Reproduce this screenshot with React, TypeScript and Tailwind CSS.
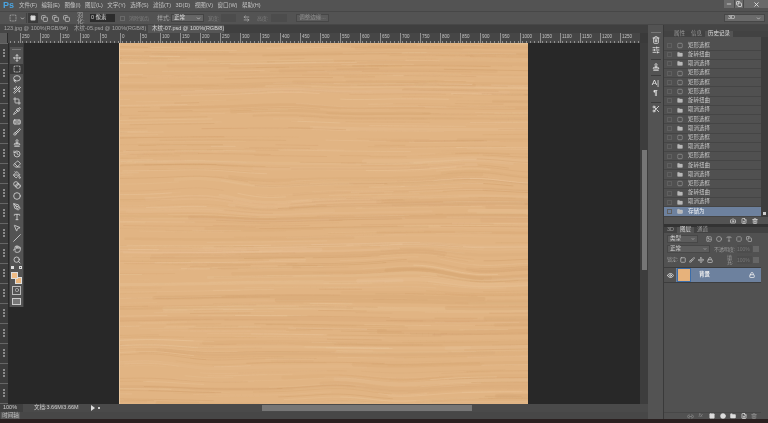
import { useMemo } from 'react';
import {
  Move, SquareDashed, Lasso, Wand2, Crop, Pipette, Bandage, Brush, Stamp, History, Eraser,
  PaintBucket, Blend, Circle, PenTool, Type, MousePointer2, Slash, Hand, Search, Minus, Copy, X,
  ChevronDown, Eye, Lock, Link2, Image, Square, Folder, FilePlus, Trash2, Camera,
  SlidersHorizontal, Scissors, ArrowLeftRight,
} from 'lucide-react';

const menus = ['文件(F)', '编辑(E)', '图像(I)', '图层(L)', '文字(Y)', '选择(S)', '滤镜(T)', '3D(D)', '视图(V)', '窗口(W)', '帮助(H)'];

const tools = [
  Move, SquareDashed, Lasso, Wand2, Crop, Pipette, Bandage, Brush, Stamp, History, Eraser,
  PaintBucket, Blend, Circle, PenTool, Type, MousePointer2, Slash, Hand, Search,
];

const historyRows = [
  '矩形选框', '旋转扭曲', '取消选择', '矩形选框', '矩形选框', '矩形选框', '旋转扭曲', '取消选择', '矩形选框',
  '取消选择', '矩形选框', '取消选择', '矩形选框', '旋转扭曲', '取消选择', '矩形选框', '旋转扭曲', '取消选择',
];

const hRuler = ['250', '200', '150', '100', '50', '0', '50', '100', '150', '200', '250', '300', '350', '400', '450', '500', '550', '600', '650', '700', '750', '800', '850', '900', '950', '1000', '1050', '1100', '1150', '1200', '1250'];

// 木纹 - seeded so every render gives the same grain
function WoodGrain() {
  const lines = useMemo(() => {
    let seed = 4242;
    const rnd = () => {
      seed = (seed * 16807) % 2147483647;
      return seed / 2147483647;
    };
    const knots = [
      { x: 115, y: 150, a: 10 },
      { x: 330, y: 225, a: 10 },
      { x: 250, y: 345, a: 8 },
      { x: 60, y: 320, a: 7 },
      { x: 385, y: 130, a: 8 },
      { x: 200, y: 60, a: 4 },
    ];
    const out: { d: string; c: string; w: number; o: number }[] = [];
    for (let i = 0; i < 760; i++) {
      const wide = i < 110;
      const y0 = rnd() * 385 - 12;
      const start = rnd() * 460 - 80;
      const len = wide ? 200 + rnd() * 300 : 25 + rnd() * 130;
      const pts: string[] = [];
      for (let x = start; x <= start + len; x += 6) {
        let y = y0 + Math.sin(x / 70 + y0 / 30) * 1.2;
        for (const k of knots) {
          const dx = (x - k.x) / 50;
          const dy = (y0 - k.y) / 20;
          y += k.a * dx * Math.exp(-dx * dx - dy * dy);
        }
        pts.push(`${x.toFixed(1)} ${y.toFixed(1)}`);
      }
      const light = rnd() > 0.55;
      out.push({
        d: 'M' + pts.join('L'),
        c: light ? '#eccaa2' : '#cf9c68',
        w: wide ? 1.5 + rnd() * 3 : 0.4 + rnd() * 0.6,
        o: wide ? 0.1 + rnd() * 0.14 : 0.15 + rnd() * 0.3,
      });
    }
    return out;
  }, []);

  return (
    <svg viewBox="0 0 409 361" preserveAspectRatio="none" className="h-full w-full">
      <rect width="409" height="361" fill="#e1b483" />
      {lines.map((l, i) => (
        <path key={i} d={l.d} fill="none" stroke={l.c} strokeWidth={l.w} opacity={l.o} strokeLinecap="round" strokeLinejoin="round" />
      ))}
    </svg>
  );
}

function MenuBar() {
  return (
    <div className="flex h-[11px] shrink-0 items-center bg-[#535353] pl-[3px]">
      <span className="w-[16px] text-[9px] leading-none font-bold text-[#4aa3df]">Ps</span>
      <div className="flex gap-[4.5px] text-[5.5px] leading-none text-[#c4c4c4]">
        {menus.map((m) => (
          <span key={m}>{m}</span>
        ))}
      </div>
      <div className="ml-auto flex h-[8px] self-start text-[#e6e6e6]">
        <span className="flex w-[10px] items-center justify-center bg-[#6a6a6a]"><Minus size={6} strokeWidth={3} /></span>
        <span className="flex w-[10px] items-center justify-center border-x border-[#4a4a4a] bg-[#6a6a6a]"><Copy size={6} strokeWidth={3} /></span>
        <span className="flex w-[24px] items-center justify-center bg-[#6a6a6a]"><X size={7} strokeWidth={3} /></span>
      </div>
    </div>
  );
}

function OptionsBar() {
  const label = 'text-[6px] leading-none text-[#a8a8a8]';
  return (
    <div className="flex h-[14px] shrink-0 items-center border-y border-[#474747] bg-[#535353] pl-[9px] text-[#c4c4c4]">
      <SquareDashed size={8} strokeWidth={2} />
      <ChevronDown size={5} strokeWidth={4} className="ml-[3px]" />
      <span className="ml-[1px] h-[10px] w-px bg-[#434343]" />
      <span className="ml-[1px] flex h-[10px] w-[10px] items-center justify-center bg-[#3a3a3a]"><Square size={6} fill="#ddd" /></span>
      <span className="ml-[1px] flex w-[11px] justify-center"><Copy size={7} strokeWidth={2.5} /></span>
      <span className="flex w-[11px] justify-center"><Copy size={7} strokeWidth={2.5} /></span>
      <span className="flex w-[11px] justify-center"><Copy size={7} strokeWidth={2.5} /></span>
      <span className={`${label} ml-[5px] w-[13px]`}>羽化:</span>
      <span className="flex h-[8px] w-[25px] items-center bg-[#2c2c2c] pl-[1px] text-[5.5px] leading-none text-[#d4d4d4]">0 像素</span>
      <span className="ml-[5px] h-[5px] w-[5px] border border-[#6a6a6a]" />
      <span className="ml-[4px] w-[24px] text-[5px] leading-none text-[#7d7d7d]">消除锯齿</span>
      <span className={`${label} ml-[4px] w-[14px]`}>样式:</span>
      <span className="flex h-[8px] w-[33px] items-center justify-between border border-[#444] bg-[#656565] px-[2px] text-[5.5px] leading-none text-[#ddd]">
        正常<ChevronDown size={5} strokeWidth={3} />
      </span>
      <span className="ml-[4px] w-[13px] text-[5px] leading-none text-[#7d7d7d]">宽度:</span>
      <span className="h-[8px] w-[15px] bg-[#4c4c4c]" />
      <ArrowLeftRight size={7} strokeWidth={2.5} className="ml-[7px] text-[#b0b0b0]" />
      <span className="ml-[7px] w-[14px] text-[5px] leading-none text-[#7d7d7d]">高度:</span>
      <span className="h-[8px] w-[16px] bg-[#4c4c4c]" />
      <span className="ml-[9px] flex h-[8px] w-[33px] items-center justify-center border border-[#474747] bg-[#5a5a5a] text-[5.5px] leading-none text-[#8f8f8f]">调整边缘...</span>
      <span className="mr-[3px] ml-auto flex h-[8px] w-[41px] items-center justify-between border border-[#474747] bg-[#6a6a6a] px-[3px] text-[5.5px] leading-none text-[#ddd]">
        3D<ChevronDown size={5} strokeWidth={3} />
      </span>
    </div>
  );
}

function DocTab({ title, active, width }: { title: string; active?: boolean; width: string }) {
  return (
    <div className={`flex h-full items-center justify-between pr-[2px] pl-[4px] ${width} ${active ? 'bg-[#555555] text-[#d8d8d8]' : 'bg-[#464646] text-[#a6a6a6]'}`}>
      <span className="text-[5.5px] leading-none whitespace-nowrap">{title}</span>
      <X size={4} strokeWidth={4} />
    </div>
  );
}

function Ruler() {
  return (
    <div className="flex h-[10px] shrink-0 bg-[#464646]">
      <div className="w-[8px] shrink-0 border-r border-[#2a2a2a] bg-[#5a5a5a]" />
      <div className="flex min-w-0 flex-1 overflow-hidden bg-[repeating-linear-gradient(90deg,#8f8f8f_0,#8f8f8f_1px,transparent_1px,transparent_4px)] bg-[length:4px_2px] bg-bottom bg-repeat-x pl-[12px]">
        {hRuler.map((n, i) => (
          <span key={i} className="h-full w-[20px] shrink-0 border-l border-[#8f8f8f] pl-[1px] text-[4.5px] leading-[7px] text-[#c4c4c4]">{n}</span>
        ))}
      </div>
      <div className="w-[8px] shrink-0 bg-[#3a3a3a]" />
    </div>
  );
}

function LeftRuler() {
  return (
    <div className="flex w-[8px] shrink-0 flex-col overflow-hidden bg-[#3c3c3c]">
      {Array.from({ length: 19 }).map((_, i) => (
        <div key={i} className="flex h-[20px] shrink-0 flex-col items-center gap-[1px] border-t border-[#666] pt-[5px]">
          <span className="h-[2px] w-[2px] bg-[#8c8c8c]" />
          <span className="h-[2px] w-[2px] bg-[#8c8c8c]" />
          <span className="h-[2px] w-[2px] bg-[#8c8c8c]" />
        </div>
      ))}
    </div>
  );
}

function Toolbox() {
  return (
    <div className="ml-[1px] flex h-[264px] w-[15px] shrink-0 flex-col items-center border-x border-[#3a3a3a] bg-[#535353] text-[#dcdcdc]">
      <div className="h-[4px] w-full bg-[#3f3f3f]" />
      <div className="mt-[2px] mb-[3px] h-px w-[9px] bg-[#777]" />
      {tools.map((Icon, i) => (
        <div key={i} className={`flex h-[10.6px] w-[13px] shrink-0 items-center justify-center ${i === 1 ? 'bg-[#3a3a3a]' : ''}`}>
          <Icon size={8} strokeWidth={2.4} />
        </div>
      ))}
      <div className="mt-[1px] flex w-[11px] justify-between">
        <span className="h-[3px] w-[3px] bg-[#ddd]" />
        <span className="h-[3px] w-[3px] border border-[#ddd]" />
      </div>
      <div className="relative mt-[3px] h-[14px] w-[13px]">
        <span className="absolute top-[5px] left-[5px] h-[7px] w-[7px] border border-[#ddd] bg-[#e9b47a]" />
        <span className="absolute top-[0px] left-[1px] h-[7px] w-[7px] border border-[#ddd] bg-[#efbb84]" />
      </div>
      <div className="flex h-[9px] w-[9px] items-center justify-center border border-[#bbb]"><Circle size={4} strokeWidth={3} /></div>
      <div className="mt-[3px] h-[7px] w-[9px] border border-[#ccc] bg-[#777]" />
    </div>
  );
}

function HistoryRow({ text, selected }: { text: string; selected?: boolean }) {
  const isMarquee = text === '矩形选框';
  return (
    <div className={`flex h-[9.22px] shrink-0 items-center border-b border-[#454545] pl-[3px] ${selected ? 'bg-[#6d819e] text-[#eef2f7]' : 'bg-[#505050] text-[#c4c4c4]'}`}>
      <span className="h-[5px] w-[5px] border border-[#5f5f5f]" />
      <span className="ml-[5px] flex w-[6px] justify-center">
        {isMarquee ? <SquareDashed size={7} strokeWidth={2} /> : <Folder size={7} fill="#b8b8b8" strokeWidth={1} />}
      </span>
      <span className="ml-[5px] text-[5.5px] leading-none">{text}</span>
    </div>
  );
}

function PanelTab({ text, active }: { text: string; active?: boolean }) {
  return (
    <span className={`flex h-full items-center px-[3px] text-[5.5px] leading-none ${active ? 'bg-[#535353] text-[#d8d8d8]' : 'text-[#9a9a9a]'}`}>{text}</span>
  );
}

function RightPanels() {
  return (
    <div className="flex w-[120px] shrink-0 bg-[#3f3f3f]">
      {/* 图标栏 */}
      <div className="flex w-[16px] shrink-0 flex-col items-center border-r border-[#3a3a3a] bg-[#535353] pt-[7px] text-[#e4e4e4]">
        <div className="h-px w-[10px] bg-[#777]" />
        <Trash2 size={8} strokeWidth={2.5} className="mt-[3px]" />
        <SlidersHorizontal size={8} strokeWidth={2.5} className="mt-[2px]" />
        <div className="mt-[5px] h-px w-[10px] bg-[#3c3c3c]" />
        <Stamp size={8} strokeWidth={2.5} className="mt-[3px]" />
        <div className="mt-[4px] h-px w-[10px] bg-[#3c3c3c]" />
        <span className="mt-[3px] h-[8px] text-[8px] leading-[8px]">A|</span>
        <span className="mt-[2px] h-[8px] text-[8px] leading-[8px] font-bold">¶</span>
        <div className="mt-[5px] h-px w-[10px] bg-[#3c3c3c]" />
        <Scissors size={8} strokeWidth={2.5} className="mt-[2px]" />
      </div>

      <div className="flex min-w-0 flex-1 flex-col">
        <div className="h-[6px] shrink-0 bg-[#454545]" />
        {/* 历史记录 */}
        <div className="flex h-[6px] shrink-0 items-end bg-[#424242] pl-[7px]">
          <PanelTab text="属性" />
          <PanelTab text="信息" />
          <PanelTab text="历史记录" active />
        </div>
        <div className="flex h-[180px] shrink-0">
          <div className="flex min-w-0 flex-1 flex-col overflow-hidden">
            <div className="h-[4.4px] shrink-0 bg-[#505050]" />
            {historyRows.map((t, i) => (
              <HistoryRow key={i} text={t} />
            ))}
            <HistoryRow text="存储为" selected />
          </div>
          <div className="flex w-[7px] shrink-0 flex-col items-center justify-end bg-[#3d3d3d] pb-[2px]">
            <span className="h-[3px] w-[3px] bg-[#ccc]" />
          </div>
        </div>
        <div className="flex h-[7px] shrink-0 items-center justify-end gap-[5px] bg-[#535353] pr-[10px] text-[#d0d0d0]">
          <Camera size={6} strokeWidth={3} />
          <FilePlus size={6} strokeWidth={3} />
          <Trash2 size={6} strokeWidth={3} />
        </div>

        <div className="h-[3px] shrink-0 bg-[#333]" />

        {/* 图层 */}
        <div className="flex h-[6px] shrink-0 items-end bg-[#424242]">
          <PanelTab text="3D" />
          <PanelTab text="图层" active />
          <PanelTab text="通道" />
        </div>
        <div className="flex min-h-0 flex-1 flex-col bg-[#515151]">
          <div className="flex h-[11px] shrink-0 items-center gap-[4px] px-[3px] text-[#b8b8b8]">
            <span className="flex h-[8px] w-[31px] items-center justify-between border border-[#474747] bg-[#5d5d5d] px-[2px] text-[5.5px] leading-none text-[#ccc]">
              类型<ChevronDown size={4} strokeWidth={3} />
            </span>
            <Image size={6} strokeWidth={2.5} className="ml-[4px]" />
            <Circle size={6} strokeWidth={2.5} />
            <Type size={6} strokeWidth={2.5} />
            <SquareDashed size={6} strokeWidth={2.5} />
            <Copy size={6} strokeWidth={2.5} />
          </div>
          <div className="flex h-[10px] shrink-0 items-center px-[3px]">
            <span className="flex h-[8px] w-[43px] items-center justify-between border border-[#474747] bg-[#5d5d5d] px-[2px] text-[5.5px] leading-none text-[#ccc]">
              正常<ChevronDown size={4} strokeWidth={3} />
            </span>
            <span className="ml-[4px] w-[23px] text-[5px] leading-none whitespace-nowrap text-[#9a9a9a]">不透明度:</span>
            <span className="h-[8px] w-[15px] bg-[#4d4d4d] text-[5px] leading-[8px] text-[#777]">100%</span>
            <span className="ml-[1px] h-[6px] w-[6px] bg-[#666]" />
          </div>
          <div className="flex h-[11px] shrink-0 items-center px-[3px] text-[#bdbdbd]">
            <span className="w-[13px] text-[5px] leading-none text-[#9a9a9a]">锁定:</span>
            <span className="flex gap-[3px]">
              <Square size={6} strokeWidth={3} />
              <Brush size={6} strokeWidth={3} />
              <Move size={6} strokeWidth={3} />
              <Lock size={6} strokeWidth={3} />
            </span>
            <span className="ml-[14px] w-[10px] text-[5px] leading-none text-[#9a9a9a]">填充:</span>
            <span className="h-[8px] w-[15px] bg-[#4d4d4d] text-[5px] leading-[8px] text-[#777]">100%</span>
            <span className="ml-[1px] h-[6px] w-[6px] bg-[#666]" />
          </div>
          <div className="mt-[2px] flex h-[16px] w-[97px] shrink-0 items-center border-y border-[#3d3d3d] bg-[#6d819e] text-[#f0f0f0]">
            <div className="flex h-full w-[12px] shrink-0 items-center justify-center bg-[#515151]">
              <Eye size={7} strokeWidth={2.5} />
            </div>
            <span className="ml-[1px] h-[14px] w-[14px] border border-[#3c6da8] bg-[#e7b27b]" />
            <span className="ml-[8px] text-[5.5px] leading-none font-bold">背景</span>
            <Lock size={6} strokeWidth={3} className="mr-[6px] ml-auto" />
          </div>
          <div className="flex-1" />
          <div className="flex h-[7px] w-[97px] shrink-0 items-center justify-end gap-[4.5px] border-t border-[#474747] pr-[4px] text-[#ddd]">
            <Link2 size={7} strokeWidth={2.5} className="text-[#8a8a8a]" />
            <span className="w-[6px] text-[5.5px] leading-none text-[#8a8a8a] italic">fx</span>
            <Square size={6} fill="#ddd" />
            <Circle size={6} fill="#ddd" />
            <Folder size={6} fill="#ddd" />
            <FilePlus size={6} strokeWidth={3} />
            <Trash2 size={6} strokeWidth={3} className="text-[#8a8a8a]" />
          </div>
        </div>
      </div>
    </div>
  );
}

export default function App() {
  return (
    <div className="flex h-[423px] w-[768px] flex-col overflow-hidden bg-[#535353] blur-[0.35px] [font-family:'Liberation_Sans','Noto_Sans_CJK_SC',sans-serif]">
      <MenuBar />
      <OptionsBar />
      <div className="flex min-h-0 flex-1">
        <div className="flex min-w-0 flex-1 flex-col">
          <div className="flex h-[8px] shrink-0 items-stretch bg-[#3f3f3f]">
            <DocTab title="123.jpg @ 100%(RGB/8#)" width="w-[70px]" />
            <DocTab title="木纹-05.psd @ 100%(RGB/8)" width="w-[78px]" />
            <DocTab title="木纹-07.psd @ 100%(RGB/8)" width="w-[76px]" active />
            <div className="flex-1" />
          </div>
          <Ruler />
          <div className="flex min-h-0 flex-1">
            <LeftRuler />
            <div className="flex min-w-0 flex-1 bg-[#282828]">
              <Toolbox />
              <div className="ml-[95px] h-full w-[409px] shrink-0 border-l border-[#eccaa2]">
                <WoodGrain />
              </div>
              <div className="flex-1" />
              <div className="flex w-[8px] shrink-0 justify-center bg-[#3d3d3d] pt-[107px]">
                <div className="h-[120px] w-[5px] bg-[#767676]" />
              </div>
            </div>
          </div>
          <div className="flex h-[8px] shrink-0 items-center bg-[#4a4a4a]">
            <span className="flex h-full w-[23px] items-center bg-[#3f3f3f] pl-[3px] text-[5.5px] leading-none text-[#d0d0d0]">100%</span>
            <span className="ml-[11px] w-[57px] text-[5.5px] leading-none text-[#d0d0d0]">文档:3.66M/3.66M</span>
            <span className="h-0 w-0 border-y-[3px] border-l-[4px] border-y-transparent border-l-[#ddd]" />
            <span className="ml-[3px] h-[2px] w-[2px] bg-[#ccc]" />
            <div className="ml-[162px] h-[6px] w-[210px] bg-[#767676]" />
          </div>
          <div className="flex h-[7px] shrink-0 items-center bg-[#474747] pl-[1px]">
            <span className="flex h-full w-[19px] items-center justify-center bg-[#5a5a5a] text-[5.5px] leading-none text-[#c4c4c4]">时间轴</span>
          </div>
        </div>
        <RightPanels />
      </div>
      <div className="h-[4px] shrink-0 bg-[#2a2020]" />
    </div>
  );
}
